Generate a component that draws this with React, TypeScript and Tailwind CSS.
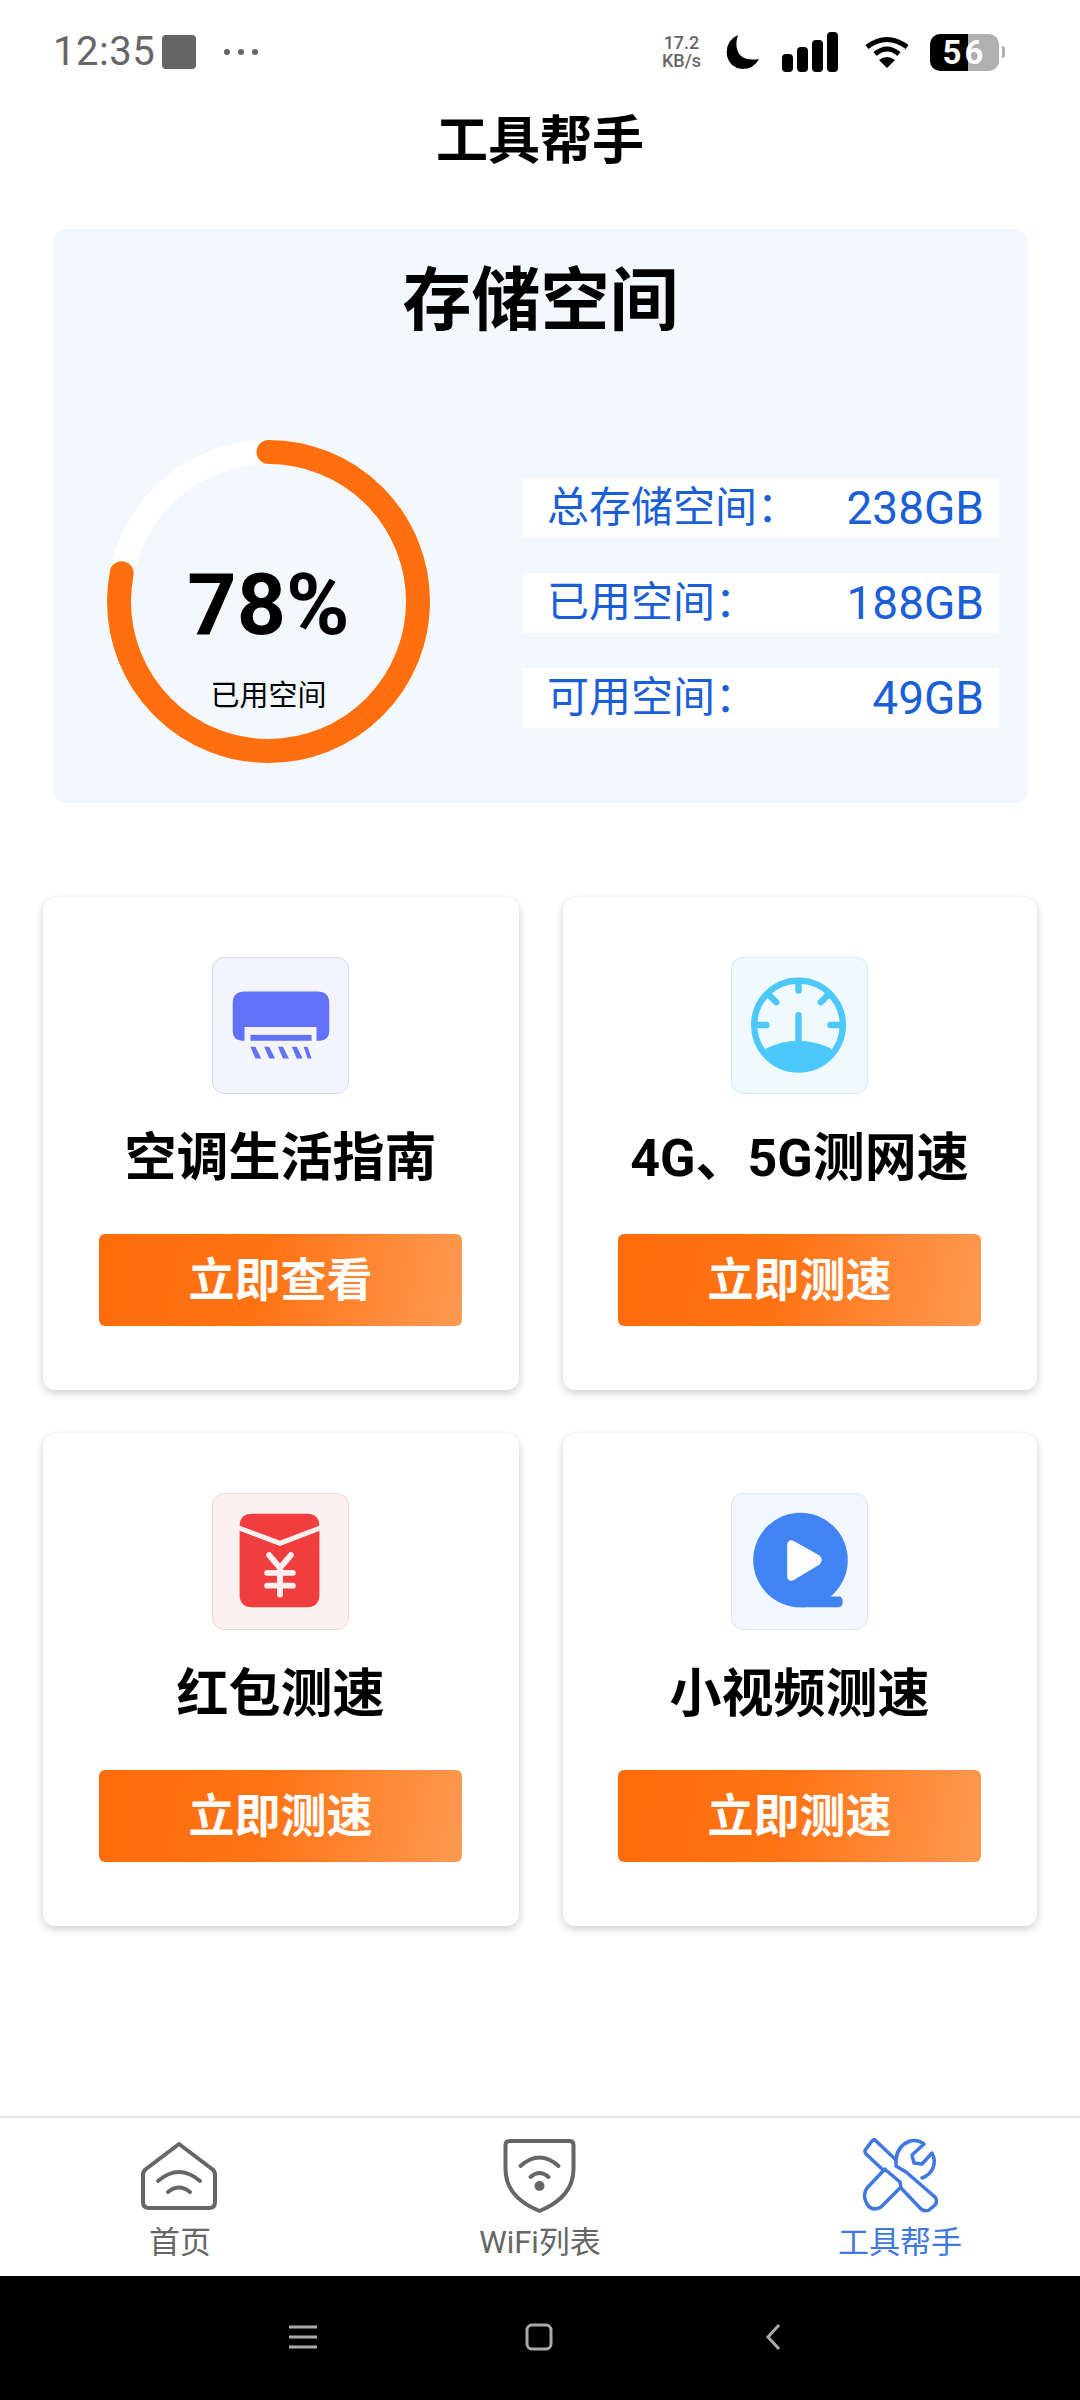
const FONT = "font-['Roboto','Noto_Sans_CJK_SC',sans-serif]";

function AirIcon() {
  return (
    <svg viewBox="0 0 137 137" className="h-full w-full">
      <path d="M32 34H106Q118 34 118 46V74Q118 83 109 84H105V70H32V84H29Q20 83 20 74V46Q20 34 32 34Z" fill="#6272f8" />
      <rect x="38" y="78" width="62" height="6" fill="#6272f8" />
      <path d="M38 90H43L49 102H43ZM52 90H57L63 102H57ZM66 90H71L77 102H71ZM80 90H85L91 102H85ZM92 90H96L100 102H96Z" fill="#6272f0" />
    </svg>
  );
}

function GaugeIcon() {
  return (
    <svg viewBox="0 0 137 137" className="h-full w-full">
      <circle cx="67.5" cy="68" r="45" fill="none" stroke="#4cc8fa" strokeWidth="6.5" />
      <path d="M34 92Q67 76 101 92Q88 116 67.5 116Q47 116 34 92Z" fill="#4cc8fa" />
      <g stroke="#4cc8fa" strokeWidth="6.5" strokeLinecap="round" fill="none">
        <path d="M67.5 24V33M38 38L45 45M97 38L90 45M26 68H35M100 68H109M67.5 58V86" />
      </g>
    </svg>
  );
}

function PacketIcon() {
  return (
    <svg viewBox="0 0 137 137" className="h-full w-full">
      <path d="M40 20H95Q108 20 108 33V102Q108 115 95 115H40Q27 115 27 102V33Q27 20 40 20Z" fill="#f03d3d" />
      <path d="M25 34L68 50L110 34" fill="none" stroke="#fdf0f0" strokeWidth="5" />
      <path d="M57 62L68 75L79 62M55 80H81M55 93H81M68 75V102" fill="none" stroke="#fdf0f0" strokeWidth="6" strokeLinecap="round" strokeLinejoin="round" />
    </svg>
  );
}

function VideoIcon() {
  return (
    <svg viewBox="0 0 137 137" className="h-full w-full">
      <circle cx="69.5" cy="67" r="48" fill="#4284f3" />
      <path d="M90 104H110Q113 106 112 112Q111 115 108 115H69Z" fill="#4284f3" />
      <path d="M57 52Q57 46 63 49L88 63Q92 67 88 71L63 86Q57 89 57 83Z" fill="#fff" stroke="#fff" strokeWidth="2" strokeLinejoin="round" />
    </svg>
  );
}

function HomeIcon() {
  return (
    <svg viewBox="0 0 76 68" className="mr-[2px] h-[68px] w-[76px]" fill="none" stroke="#666" strokeWidth="4" strokeLinecap="round" strokeLinejoin="round">
      <path d="M38 2L71 27Q74 29 74 33V60Q74 66 68 66H8Q2 66 2 60V33Q2 29 5 27Z" />
      <path d="M17 39Q38 21 59 39M27 50Q38 41 49 50" />
    </svg>
  );
}

function ShieldIcon() {
  return (
    <svg viewBox="0 0 72 74" className="mr-[2px] h-[74px] w-[75px]" fill="none" stroke="#666" strokeWidth="4" strokeLinecap="round" strokeLinejoin="round">
      <path d="M6 2H66Q70 2 70 6V30Q70 58 36 72Q2 58 2 30V6Q2 2 6 2Z" />
      <path d="M17 27Q36 10 55 27M27 38Q36 30 45 38" />
      <circle cx="36" cy="47" r="3" fill="#666" />
    </svg>
  );
}

function ToolsIcon() {
  return (
    <svg viewBox="20 16 76 76" className="h-[76px] w-[76px]" fill="none" stroke="#3f78e0" strokeWidth="3.5" strokeLinejoin="round" strokeLinecap="round">
      <path d="M33 18L54 38V44L64 50L93 75Q96 79 93 83L87 88Q83 90 79 87L59 66L58 60L45 49L40 47L24 32Q22 29 24 27L30 19Q32 17 33 18Z" />
      <path d="M54 38Q55 24 68 19Q76 17 82 22L70 33L72 41L80 42L90 31Q94 38 91 46Q88 53 80 56" />
      <path d="M43 47L25 66Q20 73 25 82Q30 90 39 85L58 66" />
    </svg>
  );
}

function StatusBar() {
  return (
    <div className="flex h-[90px] w-full items-center pt-[14px] text-[#666]">
      <span className="ml-[53px] w-[101px] text-[40px] leading-none tracking-[0.5px]">12:35</span>
      <div className="ml-[8px] h-[34px] w-[34px] rounded-[4px] bg-[#666]" />
      <div className="ml-[28px] flex gap-[8px]">
        <div className="h-[6px] w-[6px] rounded-full bg-[#666]" />
        <div className="h-[6px] w-[6px] rounded-full bg-[#666]" />
        <div className="h-[6px] w-[6px] rounded-full bg-[#666]" />
      </div>
      <div className="ml-[403px] flex w-[41px] flex-col items-center text-[18px] font-medium leading-[18px]">
        <span>17.2</span>
        <span>KB/s</span>
      </div>
      <svg viewBox="0 0 34 34" className="ml-[24px] h-[34px] w-[34px]">
        <path d="M12 0Q8 12 14 20Q20 26 33 24Q28 34 16 34Q4 33 1 21Q-1 6 12 0Z" fill="#000" />
      </svg>
      <svg viewBox="0 0 56 40" className="ml-[22px] h-[40px] w-[56px]">
        <rect x="0" y="22" width="11" height="18" rx="4" fill="#000" />
        <rect x="15" y="15" width="11" height="25" rx="4" fill="#000" />
        <rect x="30" y="8" width="11" height="32" rx="4" fill="#000" />
        <rect x="45" y="0" width="11" height="40" rx="4" fill="#000" />
      </svg>
      <svg viewBox="0 0 44 32" className="ml-[27px] h-[32px] w-[44px]" fill="none" stroke="#000" strokeWidth="5">
        <path d="M2 11Q22 -4 42 11M10 18Q22 8 34 18" />
        <path d="M22 32L14 24Q22 18 30 24Z" fill="#000" stroke="none" />
      </svg>
      <div className="relative ml-[21px] flex h-[37px] w-[69px] overflow-hidden rounded-[10px]">
        <div className="w-[38px] bg-black" />
        <div className="flex-1 bg-[#b0b0b0]" />
        <span className="absolute inset-0 flex items-center justify-center text-[33px] font-bold leading-none tracking-[3px] text-white">56</span>
      </div>
      <div className="ml-[3px] h-[12px] w-[3px] rounded-r-full bg-[#b0b0b0]" />
    </div>
  );
}

function Ring() {
  const r = 149.5;
  const c = 2 * Math.PI * r;
  return (
    <div className="relative h-[323px] w-[323px] shrink-0">
      <svg viewBox="0 0 323 323" className="h-full w-full -rotate-90">
        <circle cx="161.5" cy="161.5" r={r} fill="none" stroke="#fff" strokeWidth="24" />
        <circle cx="161.5" cy="161.5" r={r} fill="none" stroke="#ff6f0d" strokeWidth="24" strokeLinecap="round" strokeDasharray={`${c * 0.78} ${c}`} />
      </svg>
      <div className="absolute inset-0 flex flex-col items-center">
        <span className="mt-[122px] text-[86px] font-bold leading-[86px] text-black">78%</span>
        <span className="mt-[28px] text-[29px] leading-[40px] text-black">已用空间</span>
      </div>
    </div>
  );
}

function StorageRow({ label, value }: { label: string; value: string }) {
  return (
    <div className="flex h-[60px] items-center justify-between bg-white pl-[24px] pr-[15px] text-[#1a5ed8]">
      <span className="text-[42px] leading-none">{label}</span>
      <span className="text-[46px] leading-none">{value}</span>
    </div>
  );
}

const TOOLS = [
  { title: "空调生活指南", action: "立即查看", box: "bg-[#f3f4fe] border-[#d5d8f3]", icon: <AirIcon /> },
  { title: "4G、5G测网速", action: "立即测速", box: "bg-[#eff9fe] border-[#cfeaf7]", icon: <GaugeIcon /> },
  { title: "红包测速", action: "立即测速", box: "bg-[#fdf0f0] border-[#f3d5d5]", icon: <PacketIcon /> },
  { title: "小视频测速", action: "立即测速", box: "bg-[#f2f6fe] border-[#dde6f3]", icon: <VideoIcon /> },
];

function ToolCard({ tool }: { tool: (typeof TOOLS)[number] }) {
  return (
    <div className="flex h-[492px] flex-col items-center rounded-[12px] bg-white pr-[1px] pt-[59px] shadow-[0_3px_8px_rgba(0,0,0,0.2)]">
      <div className={`h-[137px] w-[137px] overflow-hidden rounded-[12px] border ${tool.box}`}>{tool.icon}</div>
      <div className="mt-[29px] flex h-[72px] items-center text-[52px] font-bold leading-none text-black">{tool.title}</div>
      <div className="mt-[39px] flex h-[92px] w-[363px] items-center justify-center rounded-[6px] bg-[linear-gradient(100deg,#ff6c0a_0%,#ff7314_45%,#ff9a52_100%)] text-[46px] font-bold text-white">
        {tool.action}
      </div>
    </div>
  );
}

function NavItem({ label, active, children }: { label: string; active?: boolean; children: React.ReactNode }) {
  return (
    <div className="flex w-[360px] flex-col items-center">
      <div className="flex h-[76px] items-center justify-center">{children}</div>
      <span className={`mt-[9px] text-[31px] leading-[40px] ${active ? "text-[#3f78e0]" : "text-[#666]"}`}>{label}</span>
    </div>
  );
}

export default function App() {
  return (
    <div className={`flex h-[2400px] w-[1080px] flex-col bg-white ${FONT}`}>
      <StatusBar />
      <div className="flex h-[104px] items-center justify-center text-[52px] font-bold leading-none text-black">工具帮手</div>

      <div className="ml-[53px] mr-[52px] mt-[35px] h-[574px] rounded-[12px] bg-[#f3f8fe] pt-[24px]">
        <div className="flex h-[96px] items-center justify-center text-[69px] font-bold leading-none text-black">存储空间</div>
        <div className="mt-[91px] flex items-center pl-[54px]">
          <Ring />
          <div className="ml-[93px] flex w-[476px] flex-col gap-[35px] pt-[2px]">
            <StorageRow label="总存储空间：" value="238GB" />
            <StorageRow label="已用空间：" value="188GB" />
            <StorageRow label="可用空间：" value="49GB" />
          </div>
        </div>
      </div>

      <div className="ml-[43px] mt-[95px] grid grid-cols-[476px_474px] gap-[44px]">
        {TOOLS.map((tool) => (
          <ToolCard key={tool.title} tool={tool} />
        ))}
      </div>

      <div className="flex-1" />

      <div className="flex h-[160px] border-t-2 border-[#e6e6e6] pt-[20px]">
        <NavItem label="首页"><HomeIcon /></NavItem>
        <NavItem label="WiFi列表"><ShieldIcon /></NavItem>
        <NavItem label="工具帮手" active><ToolsIcon /></NavItem>
      </div>

      <div className="flex h-[124px] items-center justify-center bg-black pb-[2px] pr-[10px]">
        <svg viewBox="0 0 28 24" className="h-[24px] w-[28px]" stroke="#aaa" strokeWidth="3">
          <path d="M0 2H28M0 12H28M0 22H28" />
        </svg>
        <svg viewBox="0 0 28 28" className="ml-[208px] h-[28px] w-[28px]" fill="none" stroke="#aaa" strokeWidth="3">
          <rect x="2" y="2" width="24" height="24" rx="5" />
        </svg>
        <svg viewBox="0 0 16 28" className="ml-[212px] h-[28px] w-[16px]" fill="none" stroke="#aaa" strokeWidth="3">
          <path d="M14 2L3 14L14 26" />
        </svg>
      </div>
    </div>
  );
}
